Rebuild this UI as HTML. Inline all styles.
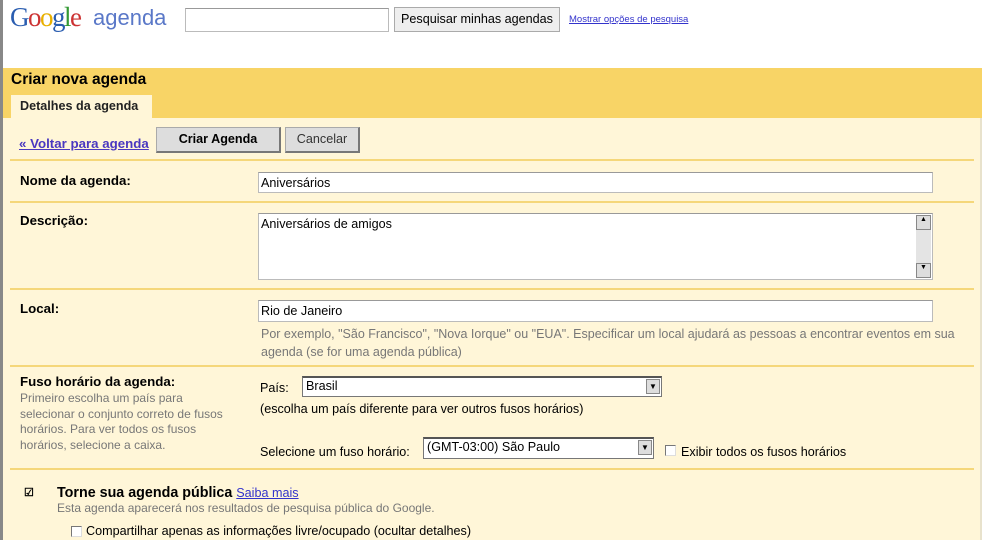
<!DOCTYPE html>
<html><head><meta charset="utf-8"><style>
*{margin:0;padding:0;box-sizing:border-box}
body{width:984px;height:540px;overflow:hidden;background:#fff;font-family:"Liberation Sans",Arial,sans-serif;font-size:12.6px;color:#000;position:relative}
.a{position:absolute;white-space:nowrap}
.line{position:absolute;left:10px;width:964px;height:2px;background:#f5d77a}
.inp{position:absolute;background:#fff;border:1px solid #bbb;border-top-color:#999;font-size:12.6px;padding:3px 2px}
.gray{color:#777;font-size:12px}
.lbl{font-weight:bold;font-size:13.3px}
.sel{position:absolute;background:#fff;border:1px solid #777;border-top:2px solid #555;font-size:12.6px;padding:1px 3px}
.arr{position:absolute;right:1px;top:1px;width:14px;height:15px;background:#ddd;border:1px solid #888;font-size:8px;text-align:center;line-height:13px}
.btn{position:absolute;background:#ddd;border:1px solid #aaa;border-right:2px solid #777;border-bottom:2px solid #777;text-align:center;line-height:22px}
.cb{position:absolute;width:11px;height:11px;border:1px solid #777;border-right-color:#ddd;border-bottom-color:#ddd;background:#fff}
</style></head><body>
<div class="a" style="left:0;top:0;width:3px;height:540px;background:#888"></div>
<div class="a" style="left:10px;top:2px;font-size:27px;letter-spacing:-1.5px;font-family:'Liberation Serif',serif"><span style="color:#2a5db0">G</span><span style="color:#c33">o</span><span style="color:#e8b000">o</span><span style="color:#2a5db0">g</span><span style="color:#393">l</span><span style="color:#c33">e</span></div>
<div class="a" style="left:93px;top:5px;font-size:22px;color:#5a78c8">agenda</div>
<div class="inp" style="left:185px;top:8px;width:204px;height:24px"></div>
<div class="btn" style="left:394px;top:7px;width:166px;height:25px;background:#eee;border:1px solid #aaa;font-size:12.6px">Pesquisar minhas agendas</div>
<div class="a" style="left:569px;top:14px;font-size:9.5px;color:#33c;text-decoration:underline">Mostrar opções de pesquisa</div>
<div class="a" style="left:3px;top:68px;width:979px;height:472px;background:#fff6d8;border-right:2px solid #e8e2cc"></div>
<div class="a" style="left:3px;top:68px;width:979px;height:50px;background:#f8d466"></div>
<div class="a" style="left:11px;top:71px;font-size:15.5px;font-weight:bold">Criar nova agenda</div>
<div class="a" style="left:11px;top:95px;width:141px;height:23px;background:#fff6d8;font-size:12.6px;font-weight:bold;padding:4px 0 0 9px;color:#222">Detalhes da agenda</div>
<div class="a" style="left:19px;top:136px;font-size:13.3px;font-weight:bold;color:#4a38c0;text-decoration:underline">« Voltar para agenda</div>
<div class="btn" style="left:156px;top:127px;width:125px;height:26px;font-weight:bold;font-size:12.6px">Criar Agenda</div>
<div class="btn" style="left:285px;top:127px;width:75px;height:26px;font-size:12.6px;color:#333">Cancelar</div>
<div class="line" style="top:159px"></div>
<div class="a lbl" style="left:20px;top:173px">Nome da agenda:</div>
<div class="inp" style="left:258px;top:172px;width:675px;height:21px">Aniversários</div>
<div class="line" style="top:201px"></div>
<div class="a lbl" style="left:20px;top:213px">Descrição:</div>
<div class="inp" style="left:258px;top:213px;width:675px;height:67px">Aniversários de amigos
<div style="position:absolute;right:1px;top:1px;width:15px;height:63px;background:#e4e4e4"><div style="height:15px;border:1px solid #888;background:#ddd;font-size:7px;text-align:center">▲</div><div style="position:absolute;bottom:0;width:15px;height:15px;border:1px solid #888;background:#ddd;font-size:7px;text-align:center">▼</div></div></div>
<div class="line" style="top:288px"></div>
<div class="a lbl" style="left:20px;top:301px">Local:</div>
<div class="inp" style="left:258px;top:300px;width:675px;height:22px">Rio de Janeiro</div>
<div class="a gray" style="left:261px;top:325px;line-height:18px;font-size:12.5px">Por exemplo, "São Francisco", "Nova Iorque" ou "EUA". Especificar um local ajudará as pessoas a encontrar eventos em sua<br>agenda (se for uma agenda pública)</div>
<div class="line" style="top:365px"></div>
<div class="a lbl" style="left:20px;top:374px">Fuso horário da agenda:</div>
<div class="a gray" style="left:20px;top:391px;line-height:15.5px">Primeiro escolha um país para<br>selecionar o conjunto correto de fusos<br>horários. Para ver todos os fusos<br>horários, selecione a caixa.</div>
<div class="a" style="left:260px;top:381px">País:</div>
<div class="sel" style="left:302px;top:376px;width:360px;height:21px">Brasil<div class="arr">▼</div></div>
<div class="a" style="left:260px;top:402px">(escolha um país diferente para ver outros fusos horários)</div>
<div class="a" style="left:260px;top:445px">Selecione um fuso horário:</div>
<div class="sel" style="left:423px;top:437px;width:231px;height:22px">(GMT-03:00) São Paulo<div class="arr">▼</div></div>
<div class="cb" style="left:665px;top:445px"></div>
<div class="a" style="left:681px;top:445px">Exibir todos os fusos horários</div>
<div class="line" style="top:468px"></div>
<div class="a" style="left:24px;top:486px;font-size:11px;font-weight:bold">☑</div>
<div class="a" style="left:57px;top:485px;font-size:14.3px;font-weight:bold">Torne sua agenda pública <span style="font-weight:normal;font-size:12.6px;color:#33c;text-decoration:underline">Saiba mais</span></div>
<div class="a gray" style="left:57px;top:501px">Esta agenda aparecerá nos resultados de pesquisa pública do Google.</div>
<div class="cb" style="left:71px;top:526px"></div>
<div class="a" style="left:86px;top:524px">Compartilhar apenas as informações livre/ocupado (ocultar detalhes)</div>
</body></html>
